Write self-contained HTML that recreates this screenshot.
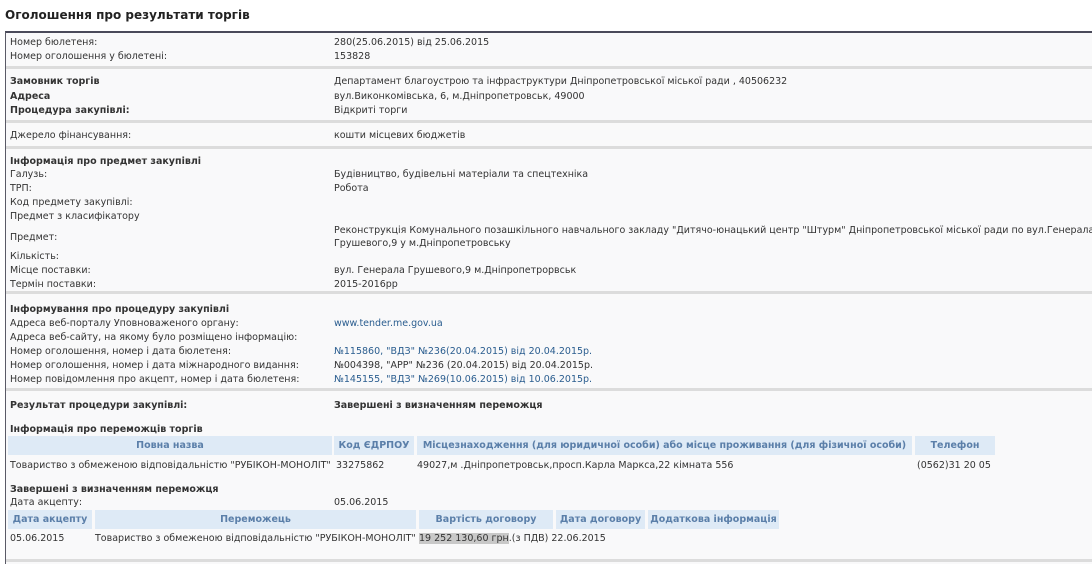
<!DOCTYPE html>
<html><head><meta charset="utf-8"><style>
html,body{margin:0;width:1092px;height:564px;overflow:hidden}
body{background:#fff;font-family:"DejaVu Sans","Liberation Sans",sans-serif;font-size:9.5px;color:#333;position:relative}
.t{position:absolute;white-space:nowrap;line-height:14px;margin-top:2px}
.b{font-weight:bold}
.l{color:#2a5d8f}
.box{position:absolute;left:5px;top:31px;width:1100px;height:540px;background:#f9f9fa;border-top:2px solid #4a4a5a;border-left:1px solid #5a5a66}
.sep{position:absolute;left:6px;width:1090px;height:3px;background:#dcdcdc}
.h{position:absolute;height:19px;background:#deeaf6;color:#5b7fa9;font-weight:bold;text-align:center;line-height:19px;white-space:nowrap}
</style></head><body>
<div class="t b" style="left:5px;top:6px;font-size:12px;color:#222">Оголошення про результати торгів</div>
<div class="box"></div>
<div class="sep" style="top:66px"></div>
<div class="sep" style="top:120px"></div>
<div class="sep" style="top:146px"></div>
<div class="sep" style="top:291px"></div>
<div class="sep" style="top:388px"></div>
<div class="sep" style="top:559px"></div>

<div class="t" style="left:10px;top:34px">Номер бюлетеня:</div>
<div class="t" style="left:334px;top:34px">280(25.06.2015) від 25.06.2015</div>
<div class="t" style="left:10px;top:48px">Номер оголошення у бюлетені:</div>
<div class="t" style="left:334px;top:48px">153828</div>

<div class="t b" style="left:10px;top:73px">Замовник торгів</div>
<div class="t" style="left:334px;top:73px">Департамент благоустрою та інфраструктури Дніпропетровської міської ради , 40506232</div>
<div class="t b" style="left:10px;top:88px">Адреса</div>
<div class="t" style="left:334px;top:88px">вул.Виконкомівська, 6, м.Дніпропетровськ, 49000</div>
<div class="t b" style="left:10px;top:102px">Процедура закупівлі:</div>
<div class="t" style="left:334px;top:102px">Відкриті торги</div>

<div class="t" style="left:10px;top:127px">Джерело фінансування:</div>
<div class="t" style="left:334px;top:127px">кошти місцевих бюджетів</div>

<div class="t b" style="left:10px;top:153px">Інформація про предмет закупівлі</div>
<div class="t" style="left:10px;top:166px">Галузь:</div>
<div class="t" style="left:334px;top:166px">Будівництво, будівельні матеріали та спецтехніка</div>
<div class="t" style="left:10px;top:180px">ТРП:</div>
<div class="t" style="left:334px;top:180px">Робота</div>
<div class="t" style="left:10px;top:194px">Код предмету закупівлі:</div>
<div class="t" style="left:10px;top:208px">Предмет з класифікатору</div>
<div class="t" style="left:10px;top:229px">Предмет:</div>
<div class="t" style="left:334px;top:222px">Реконструкція Комунального позашкільного навчального закладу "Дитячо-юнацький центр "Штурм" Дніпропетровської міської ради по вул.Генерала</div>
<div class="t" style="left:334px;top:235px">Грушевого,9 у м.Дніпропетровську</div>
<div class="t" style="left:10px;top:248px">Кількість:</div>
<div class="t" style="left:10px;top:262px">Місце поставки:</div>
<div class="t" style="left:334px;top:262px">вул. Генерала Грушевого,9 м.Дніпропетрорвськ</div>
<div class="t" style="left:10px;top:276px">Термін поставки:</div>
<div class="t" style="left:334px;top:276px">2015-2016рр</div>

<div class="t b" style="left:10px;top:301px">Інформування про процедуру закупівлі</div>
<div class="t" style="left:10px;top:315px">Адреса веб-порталу Уповноваженого органу:</div>
<div class="t l" style="left:334px;top:315px">www.tender.me.gov.ua</div>
<div class="t" style="left:10px;top:329px">Адреса веб-сайту, на якому було розміщено інформацію:</div>
<div class="t" style="left:10px;top:343px">Номер оголошення, номер і дата бюлетеня:</div>
<div class="t l" style="left:334px;top:343px">№115860, "ВДЗ" №236(20.04.2015) від 20.04.2015р.</div>
<div class="t" style="left:10px;top:357px">Номер оголошення, номер і дата міжнародного видання:</div>
<div class="t" style="left:334px;top:357px">№004398, "АРР" №236 (20.04.2015) від 20.04.2015р.</div>
<div class="t" style="left:10px;top:371px">Номер повідомлення про акцепт, номер і дата бюлетеня:</div>
<div class="t l" style="left:334px;top:371px">№145155, "ВДЗ" №269(10.06.2015) від 10.06.2015р.</div>

<div class="t b" style="left:10px;top:397px">Результат процедури закупівлі:</div>
<div class="t b" style="left:334px;top:397px">Завершені з визначенням переможця</div>

<div class="t b" style="left:10px;top:421px">Інформація про переможців торгів</div>
<div class="h" style="left:8px;top:436px;width:324px">Повна назва</div>
<div class="h" style="left:334px;top:436px;width:80px">Код ЄДРПОУ</div>
<div class="h" style="left:417px;top:436px;width:495px">Місцезнаходження (для юридичної особи) або місце проживання (для фізичної особи)</div>
<div class="h" style="left:915px;top:436px;width:80px">Телефон</div>
<div class="t" style="left:10px;top:457px">Товариство з обмеженою відповідальністю "РУБІКОН-МОНОЛІТ"</div>
<div class="t" style="left:336px;top:457px">33275862</div>
<div class="t" style="left:417px;top:457px">49027,м .Дніпропетровськ,просп.Карла Маркса,22 кімната 556</div>
<div class="t" style="left:917px;top:457px">(0562)31 20 05</div>

<div class="t b" style="left:10px;top:481px">Завершені з визначенням переможця</div>
<div class="t" style="left:10px;top:494px">Дата акцепту:</div>
<div class="t" style="left:334px;top:494px">05.06.2015</div>
<div class="h" style="left:8px;top:510px;width:84px">Дата акцепту</div>
<div class="h" style="left:95px;top:510px;width:321px">Переможець</div>
<div class="h" style="left:419px;top:510px;width:134px">Вартість договору</div>
<div class="h" style="left:556px;top:510px;width:89px">Дата договору</div>
<div class="h" style="left:648px;top:510px;width:131px">Додаткова інформація</div>
<div class="t" style="left:10px;top:530px">05.06.2015</div>
<div class="t" style="left:95px;top:530px">Товариство з обмеженою відповідальністю "РУБІКОН-МОНОЛІТ"</div>
<div class="t" style="left:419px;top:530px"><span style="background:#c8c8c8">19 252 130,60 грн</span>.(з ПДВ) 22.06.2015</div>
</body></html>
